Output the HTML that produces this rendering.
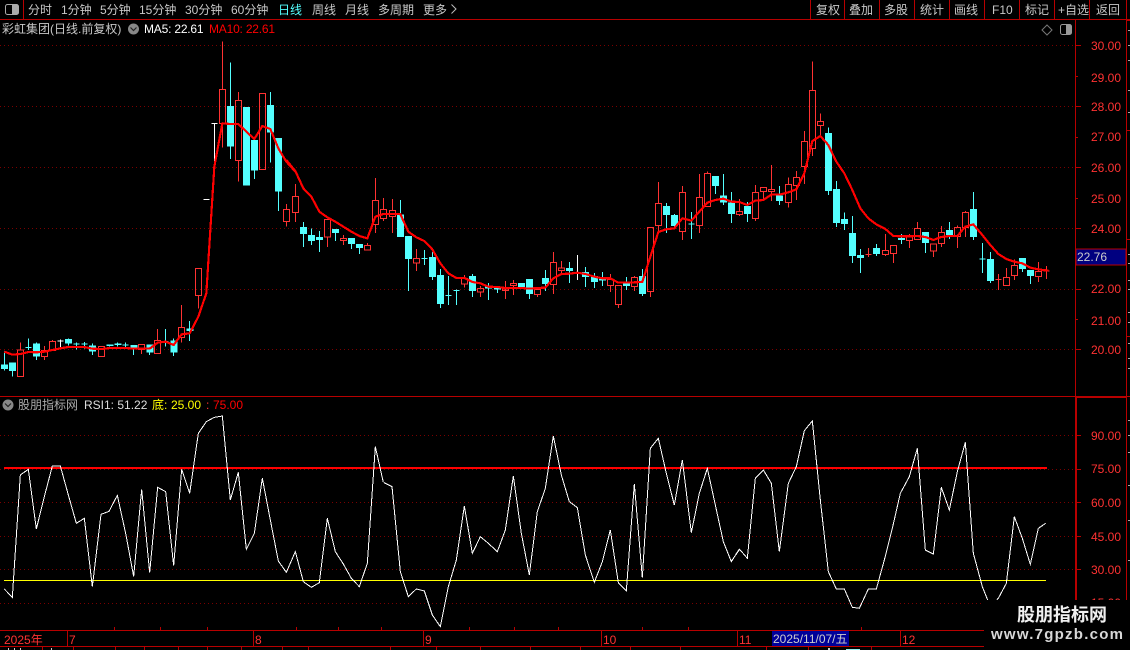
<!DOCTYPE html>
<html><head><meta charset="utf-8"><style>
html,body{margin:0;padding:0;background:#000;width:1130px;height:650px;overflow:hidden}
svg{display:block;position:absolute;left:0;top:0}
text{font-family:"Liberation Sans","Noto Sans CJK SC",sans-serif;font-size:12px}
.l{stroke:#b80000;stroke-width:1;fill:none;shape-rendering:crispEdges}
.g{stroke:#7a0000;stroke-width:1;stroke-dasharray:1 3;fill:none;shape-rendering:crispEdges}
.r{fill:#ff3232}
.t{fill:#c8c8c8}
.cw{stroke:#54ffff;stroke-width:3;fill:none;shape-rendering:crispEdges}
.cb{fill:#54ffff;stroke:none;shape-rendering:crispEdges}
.rb{stroke:#ff3232;stroke-width:3;fill:none;shape-rendering:crispEdges}
.w{stroke:#fff;stroke-width:3;fill:none;shape-rendering:crispEdges}
.ma{stroke:#ff0000;stroke-width:6.5;fill:none;stroke-linejoin:round;shape-rendering:crispEdges}
.rsi{stroke:#fff;stroke-width:3;fill:none;shape-rendering:crispEdges}
</style></head><body>
<svg width="1130" height="650" viewBox="0 0 1130 650" xmlns="http://www.w3.org/2000/svg">
<rect width="1130" height="650" fill="#000"/>

<!-- grid -->
<path class="g" d="M0 45.5H1075M0 106.5H1075M0 167.5H1075M0 228.5H1075M0 289.5H1075M0 349.5H1075"/>
<path class="g" d="M0 435.5H1075M0 469.5H1075M0 502.5H1075M0 536.5H1075M0 569.5H1075M0 603.5H1075"/>

<!-- candles A -->
<g transform="translate(0,30) scale(.33333)">
<path class="cw" d="M13 965V1022M37 1000V1040M85 925V960M76 953h18M109 937V990M205 925V947M229 938V958M220 942h18M253 936V955M244 942h18M277 940V975M329 943V950M353 938V950M377 938V955M368 945h18M401 945V975M449 943V975M497 897V950M488 934h18M521 925V978M569 873V933M691 97V387M763 330V447M811 186V397M835 324V543"/>
<path class="cb" d="M3 1003h21v14h-21zM27 997h21v26h-21zM99 940h21v40h-21zM195 927h21v13h-21zM267 946h21v19h-21zM319 943h21v5h-21zM343 940h21v5h-21zM391 945h21v13h-21zM439 943h21v25h-21zM511 931h21v37h-21zM559 895h21v8h-21zM681 228h21v122h-21zM729 231h21v236h-21zM753 330h21v92h-21zM801 225h21v83h-21zM825 324h21v161h-21z"/>
<path class="rb" d="M52 960h18v80h-18zM61 937V960M124 962h18v18h-18zM133 948V962M133 980V990M148 934h18v28h-18zM157 930V934M296 950h18v30h-18zM416 943h18v15h-18zM425 958V972M464 932h18v38h-18zM473 897V932M536 893h18v29h-18zM545 825V893M545 922V938M586 715h18v82h-18zM595 797V835M658 178h18v102h-18zM667 34V178M667 280V352M706 211h18v180h-18zM715 186V211M715 391V455M778 190h18v228h-18z"/>
<path class="w" d="M181 928V952M172 933h18M610 508h18M643 281V402M634 281h18"/>
</g>
<!-- candles B -->
<g transform="translate(280,160) scale(.33333)">
<path class="rb" d="M10 148h18v37h-18zM19 132V148M19 185V200M37 109h18v49h-18zM46 72V109M46 158V186M133 178h18v53h-18zM142 231V261M181 235h18v7h-18zM190 225V235M190 242V255M253 256h18v14h-18zM262 249V256M277 121h18v72h-18zM286 54V121M286 193V219M301 148h18v28h-18zM310 114V148M310 176V183M328 151h18v19h-18zM337 117V151M337 170V219M400 295h18v14h-18zM409 267V295M409 309V333M544 355h18v17h-18zM553 345V355M553 372V382M592 385h18v11h-18zM601 378V385M601 396V411M667 387h18v5h-18zM676 363V417M691 370h18v6h-18zM700 360V370M700 376V405M763 388h18v16h-18zM772 404V411M811 307h18v67h-18zM820 276V307M820 374V402M835 324h18v8h-18zM844 303V324M844 332V340"/>
<path class="cb" d="M60 201h21v21h-21zM84 225h21v18h-21zM108 231h21v9h-21zM156 207h21v12h-21zM204 234h21v18h-21zM228 252h21v12h-21zM351 163h21v68h-21zM375 228h21v69h-21zM447 291h21v60h-21zM471 345h21v87h-21zM567 348h21v45h-21zM615 378h21v8h-21zM642 384h21v4h-21zM714 369h21v12h-21zM738 357h21v45h-21zM786 354h21v18h-21zM858 324h21v9h-21z"/>
<path class="cw" d="M70 186V261M94 205V255M118 213V276M166 207V243M214 234V267M238 252V282M361 120V163M385 228V393M424 296h18M433 270V315M457 276V360M481 327V444M496 406h18M505 348V435M520 391h18M529 388V435M577 342V411M625 369V420M652 384V399M748 357V417M796 330V393M868 306V369"/>
<path class="w" d="M892 285V360"/>
</g>
<!-- candles C -->
<g transform="translate(560,160) scale(.33333)">
<path class="cb" d="M66 336h21v15h-21zM93 348h21v18h-21zM117 355h21v7h-21zM189 370h21v8h-21zM237 348h21v54h-21zM309 138h21v27h-21zM333 165h21v33h-21zM456 48h21v30h-21zM480 106h21v21h-21zM504 127h21v35h-21zM552 138h21v24h-21zM648 107h21v16h-21z"/>
<path class="cw" d="M76 321V381M103 339V384M127 336V378M199 351V390M247 327V408M319 129V219M343 162V207M385 192h18M394 156V237M466 48V102M490 42V135M514 96V189M562 126V186M658 78V135"/>
<path class="rb" d="M142 358h18v18h-18zM151 342V358M151 376V396M166 376h18v58h-18zM175 434V444M214 352h18v28h-18zM223 348V352M223 380V393M262 202h18v192h-18zM271 394V411M286 130h18v67h-18zM295 66V130M295 197V220M358 97h18v118h-18zM367 78V97M367 215V240M409 112h18v85h-18zM418 42V112M418 197V219M433 40h18v99h-18zM442 34V40M529 154h18v9h-18zM538 117V154M538 163V168M577 97h18v79h-18zM586 75V97M586 176V183M601 82h18v12h-18zM610 94V115M625 88h18v6h-18zM634 15V88M634 94V123"/>
</g>
<!-- candles D -->
<g transform="translate(780,50) scale(.33333)">
<path class="rb" d="M16 403h18v55h-18zM25 382V403M25 458V473M40 382h18v24h-18zM49 363V382M49 406V450M64 274h18v76h-18zM73 243V274M73 350V402M88 121h18v174h-18zM97 34V121M97 295V318M112 214h18v13h-18zM121 190V214M121 227V258M256 613h18M265 594V621M307 601h18v13h-18zM316 552V601M316 614V618M331 586h18v25h-18zM340 611V639M379 559h18v13h-18zM388 552V559M388 572V594M403 535h18v34h-18zM412 516V535M451 582h18v21h-18zM460 603V621M475 547h18v34h-18zM484 528V547M484 581V591M523 532h18v28h-18zM532 526V532M532 560V594M547 487h18v46h-18zM556 483V487M556 533V561M646 689h18M655 672V720M670 682h18v25h-18zM679 654V682M694 646h18v31h-18zM703 628V646M703 677V690M766 665h18v15h-18zM775 636V665M775 680V696M790 663h18M799 648V687"/>
<path class="cb" d="M135 249h21v174h-21zM159 417h21v102h-21zM183 507h21v15h-21zM207 549h21v69h-21zM231 615h21v9h-21zM279 594h21v18h-21zM354 564h21v6h-21zM426 546h21v33h-21zM498 540h21v15h-21zM570 477h21v84h-21zM621 627h21v66h-21zM717 624h21v33h-21zM741 660h21v18h-21z"/>
<path class="cw" d="M145 232V435M169 393V531M193 487V540M217 498V639M241 597V669M289 582V618M364 552V582M436 546V609M508 516V567M580 426V570M598 627h18M607 579V669M631 606V699M727 657V666M751 678V702"/>
</g>

<!-- MA line -->
<polyline class="ma" transform="translate(0,30) scale(.33333)" points="13,965 37,974 61,972 85,966 109,967 133,965 157,960 181,955 205,951 229,951 253,951 277,956 305,957 329,954 353,954 377,954 401,956 425,956 449,956 473,938 497,935 521,945 545,913 569,910 595,860 619,790 643,410 667,280 691,282 715,282 739,305 763,327 787,288 811,297 835,355 859,395 886,425"/>
<polyline class="ma" transform="translate(280,160) scale(.33333)" points="19,0 46,33 70,85 94,110 118,155 142,172 166,185 190,200 214,215 238,228 262,235 286,170 310,162 337,162 361,162 385,215 409,232 433,243 457,268 481,310 505,340 529,354 553,354 577,366 601,370 625,380 652,381 676,384 700,384 724,384 748,386 772,384 796,383 820,355 844,342 868,341 892,338"/>
<polyline class="ma" transform="translate(560,160) scale(.33333)" points="52,338 76,342 103,350 127,355 151,355 175,368 199,368 223,367 247,366 271,290 295,216 319,208 343,205 367,175 394,182 418,155 442,128 466,120 490,116 514,125 538,126 562,135 586,122 610,120 634,104 658,104 685,97 709,88 733,40"/>
<polyline class="ma" transform="translate(780,50) scale(.33333)" points="73,370 97,273 121,258 145,285 169,335 193,370 217,420 241,475 265,505 289,523 316,537 340,558 364,559 388,559 412,558 436,561 460,570 484,561 508,558 532,558 556,530 580,523 607,555 631,585 655,612 679,627 703,635 727,640 751,653 775,658 805,662"/>

<!-- RSI levels -->
<rect x="4" y="467" width="1043" height="2" fill="#ff0000" shape-rendering="crispEdges"/>
<rect x="4" y="580" width="1042" height="1" fill="#ffff00" shape-rendering="crispEdges"/>
<!-- RSI -->
<polyline class="rsi" transform="translate(0,390) scale(.33333)" points="13,597 37,622 61,255 85,238 109,417 133,320 157,228 181,228 205,315 229,400 253,385 277,590 303,373 327,364 352,316 378,435 401,560 425,298 449,548 473,292 497,305 521,527 545,238 569,310 595,130 619,95 643,82 667,78 691,330 715,247 739,478 763,430 787,265 811,390 835,513 859,547 886,485 910,575 934,592 958,578 982,385 1006,485 1030,522 1054,565 1078,590 1102,520 1126,170 1150,277"/>
<polyline class="rsi" transform="translate(380,400) scale(.33333)" points="12,248 36,260 61,515 85,590 109,567 133,573 157,645 181,680 205,560 229,480 253,318 277,460 301,410 325,430 352,455 376,390 400,228 424,400 448,525 472,335 496,265 520,108 544,225 568,305 592,323 616,465 643,547 667,485 691,390 715,548 739,572 763,252 787,533 811,145 835,115 859,220 883,315 907,180 934,398 958,280 982,205 1006,315 1030,425 1054,485 1078,447"/>
<polyline class="rsi" transform="translate(730,390) scale(.33333)" points="5,512 29,478 52,505 76,265 100,240 124,280 148,485 175,280 199,230 223,122 247,93 271,330 295,545 319,597 343,597 367,652 388,655 415,597 439,597 463,510 487,415 511,310 538,260 562,175 586,480 610,492 634,292 658,360 682,245 706,157 730,490 757,590 781,650 805,625 829,580 853,380 877,445 901,523 925,415 947,400"/>

<!-- frame lines -->
<path class="l" d="M0 19.5H1130M0 396.5H1130M0 630.5H1076M0 646.5H1076M23.5 0V19M1075.5 19V630M1126.5 19V630M810.5 0V19M844.5 0V19M879.5 0V19M914.5 0V19M949.5 0V19M984.5 0V19M1019.5 0V19M1054.5 0V19M1089.5 0V19M1126.5 0V19"/>
<path d="M1075 397h2v233h-2z" fill="#b80000" shape-rendering="crispEdges"/>
<path d="M1076 396h51v2h-51z" fill="#b80000" shape-rendering="crispEdges"/>
<!-- axis ticks upper -->
<path class="l" d="M1075 45.5h6M1075 106.5h6M1075 167.5h6M1075 228.5h6M1075 289.5h6M1075 349.5h6M1075 76.5h3M1075 137.5h3M1075 198.5h3M1075 319.5h3M1075 435.5h6M1075 469.5h6M1075 502.5h6M1075 536.5h6M1075 569.5h6M1126 239.5h4M1126 336.5h4M1126 20.5h4M1126 130.5h4"/>
<!-- right mini ticks -->
<path d="M1128 30.5h2M1128 45.5h2M1128 60.5h2M1128 90.5h2M1128 112.5h2M1128 254.5h2M1128 263.5h2M1128 280.5h2M1128 289.5h2M1128 312.5h2M1128 322.5h2M1128 343.5h2M1128 358.5h2M1128 368.5h2M1128 420.5h2M1128 435.5h2M1128 452.5h2M1128 485.5h2M1128 520.5h2M1128 560.5h2" stroke="#aaa" shape-rendering="crispEdges"/>
<!-- bottom axis ticks -->
<path class="l" d="M67.5 630V646M253.5 630V646M423.5 630V646M601.5 630V646M737.5 630V646M900.5 630V646M114.5 627V630M160.5 627V630M207.5 627V630M296.5 627V630M338.5 627V630M381.5 627V630M469.5 627V630M514.5 627V630M558.5 627V630M642.5 627V630M688.5 627V630M861.5 627V630M42.5 646V650M73.5 646V650M115.5 646V650M144.5 646V650M178.5 646V650M207.5 646V650M241.5 646V650M282.5 646V650M308.5 646V650M390.5 646V650M436.5 646V650M480.5 646V650M530.5 646V650M580.5 646V650M630.5 646V650M680.5 646V650M766.5 646V650M808.5 646V650M871.5 646V650"/>
<path d="M8 648h1v2h-1zM14 648h1v2h-1zM20 648h1v2h-1zM51 648h1v2h-1zM828 648h2v2h-2z" fill="#ccc" shape-rendering="crispEdges"/>
<path d="M846 649h14v1h-14z" fill="#9ee" shape-rendering="crispEdges"/>

<!-- top-left icon -->
<rect x="5.5" y="4.5" width="13" height="10" rx="2" fill="none" stroke="#aaa"/>
<rect x="12" y="5" width="6" height="9" fill="#aaa"/>
<!-- right icons -->
<rect x="1060.5" y="24.5" width="11" height="10" rx="2" fill="none" stroke="#999"/>
<rect x="1066" y="25" width="5" height="9" fill="#999"/>
<path d="M1047 25l5 5-5 5-5-5z" fill="none" stroke="#777"/>

<!-- top toolbar -->
<g class="t">
<text x="28" y="14">分时</text>
<text x="61" y="14">1分钟</text>
<text x="100" y="14">5分钟</text>
<text x="139" y="14">15分钟</text>
<text x="185" y="14">30分钟</text>
<text x="231" y="14">60分钟</text>
<text x="278" y="14" style="fill:#54ffff">日线</text>
<text x="312" y="14">周线</text>
<text x="345" y="14">月线</text>
<text x="378" y="14">多周期</text>
<text x="423" y="14">更多</text>
<text x="816" y="14">复权</text>
<text x="849" y="14">叠加</text>
<text x="884" y="14">多股</text>
<text x="920" y="14">统计</text>
<text x="954" y="14">画线</text>
<text x="992" y="14">F10</text>
<text x="1025" y="14">标记</text>
<text x="1058" y="14">+自选</text>
<text x="1096" y="14">返回</text>
</g>
<path d="M451.5 4.5l4.5 4.5-4.5 4.5" fill="none" stroke="#bbb"/>

<!-- title row -->
<text x="2" y="33" class="t">彩虹集团(日线.前复权)</text>
<circle cx="133.5" cy="29" r="5.5" fill="#888"/>
<path d="M130.5 27.5l3 3 3-3" fill="none" stroke="#222" stroke-width="1.2"/>
<text x="144" y="33" fill="#fff" style="letter-spacing:-.2px">MA5: 22.61</text>
<text x="209" y="33" fill="#ff0000" style="letter-spacing:-.2px">MA10: 22.61</text>

<!-- indicator row -->
<circle cx="8" cy="405" r="5.5" fill="#888"/>
<path d="M5 403.5l3 3 3-3" fill="none" stroke="#222" stroke-width="1.2"/>
<text x="18" y="409" fill="#aaa">股朋指标网</text>
<text x="84" y="409" fill="#ddd">RSI1: 51.22</text>
<text x="152" y="409" fill="#ffff00">底:</text>
<text x="171" y="409" fill="#ffff00">25.00</text>
<text x="206" y="409" fill="#ff3232">:</text>
<text x="213" y="409" fill="#ff0000">75.00</text>

<!-- price labels -->
<g class="r">
<text x="1091" y="50">30.00</text><text x="1091" y="82">29.00</text><text x="1091" y="111">28.00</text><text x="1091" y="141">27.00</text><text x="1091" y="172">26.00</text><text x="1091" y="203">25.00</text><text x="1091" y="233">24.00</text><text x="1091" y="293">22.00</text><text x="1091" y="325">21.00</text><text x="1091" y="354">20.00</text>
<text x="1091" y="440">90.00</text><text x="1091" y="473">75.00</text><text x="1091" y="507">60.00</text><text x="1091" y="541">45.00</text><text x="1091" y="574">30.00</text><text x="1091" y="607">15.00</text>
</g>
<rect x="1076" y="249" width="50" height="16" fill="#000080" stroke="#b80000" stroke-width="1" shape-rendering="crispEdges"/>
<text x="1077" y="261" fill="#ccc">22.76</text>

<!-- date axis labels -->
<g class="r">
<text x="4" y="644">2025年</text><text x="69" y="644">7</text><text x="255" y="644">8</text><text x="425" y="644">9</text><text x="603" y="644">10</text><text x="739" y="644">11</text><text x="902" y="644">12</text>
</g>
<rect x="772" y="631" width="77" height="15" fill="#000099" shape-rendering="crispEdges"/>
<text x="773" y="643" fill="#ccc">2025/11/07/五</text>

<!-- watermark -->
<rect x="984" y="600" width="146" height="50" fill="#000"/>
<text x="1017" y="621" fill="#f0f0f0" style="font-size:18px;font-weight:bold">股朋指标网</text>
<text x="991" y="639" fill="#d8d8d8" style="font-size:15px;font-weight:bold" textLength="132" lengthAdjust="spacing">www.7gpzb.com</text>
</svg>
</body></html>
